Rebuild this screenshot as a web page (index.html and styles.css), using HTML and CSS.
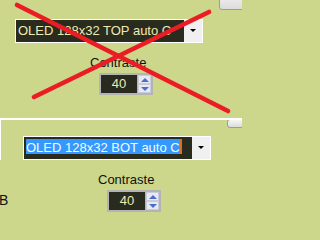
FILE: index.html
```html
<!DOCTYPE html>
<html>
<head>
<meta charset="utf-8">
<link rel="stylesheet" href="styles.css">
</head>
<body>
<div class="shot shot-top">
  <div class="head">
    <div class="bar"><span class="btn"></span></div>
    <div class="combo">
      <div class="combo-field"><span class="combo-text">OLED 128x32 TOP auto C</span></div>
      <div class="combo-drop"><span class="tri"></span></div>
    </div>
  </div>
  <div class="row">
    <span class="side">B</span>
    <div class="group">
      <div class="label">Contraste</div>
      <div class="spin">
        <div class="spin-val">40</div>
        <div class="spin-btns"><span class="sb up"></span><span class="sb down"></span></div>
      </div>
    </div>
  </div>
  <svg class="cross" width="242" height="118" viewBox="0 0 242 118">
    <line x1="17" y1="5" x2="228" y2="111"></line>
    <line x1="209" y1="12" x2="34" y2="97"></line>
  </svg>
</div>
<div class="shot shot-bot">
  <div class="head">
    <div class="bar"><span class="btn"></span></div>
    <div class="combo">
      <div class="combo-field"><span class="combo-text sel">OLED 128x32 BOT auto C</span></div>
      <div class="combo-drop"><span class="tri"></span></div>
    </div>
  </div>
  <div class="row">
    <span class="side">B</span>
    <div class="group">
      <div class="label">Contraste</div>
      <div class="spin">
        <div class="spin-val">40</div>
        <div class="spin-btns"><span class="sb up"></span><span class="sb down"></span></div>
      </div>
    </div>
  </div>
</div>
</body>
</html>
```
FILE: styles.css
```css
html, body {
  margin: 0;
  padding: 0;
}
body {
  width: 242px;
  height: 222px;
  overflow: hidden;
  background: #ccd78b;
  font-family: "Liberation Sans", Arial, sans-serif;
}
.shot {
  background: #ccd78b;
  overflow: hidden;
  position: relative;
}
.shot-top {
  height: 118px;
}
.shot-bot {
  height: 102px;
  border-top: 2px solid #ffffff;
}
.shot-bot .head {
  border-left: 1px solid #ffffff;
}
.bar {
  height: 10px;
  display: flex;
  justify-content: flex-end;
}
.shot-bot .bar {
  height: 8px;
}
.btn {
  width: 30px;
  height: 20px;
  margin-top: -10px;
  margin-right: -7px;
  box-sizing: border-box;
  border: 1px solid #9c9c9c;
  border-radius: 3px;
  background: linear-gradient(#f6f6f6, #dcdcdc);
}
.shot-bot .btn {
  height: 9px;
  margin-top: -1px;
  margin-right: -15px;
}
.combo {
  display: flex;
  width: 188px;
  height: 24px;
  box-sizing: border-box;
  border: 1px solid #ffffff;
  margin-top: 9px;
  margin-left: 15px;
}
.shot-bot .combo {
  margin-top: 8px;
  margin-left: 22px;
}
.combo-field {
  flex: 1;
  background: #2a2b1f;
  padding: 1px 0 0 2px;
  overflow: hidden;
  white-space: nowrap;
}
.combo-text {
  display: inline-block;
  font-size: 13px;
  line-height: 12px;
  padding-top: 3px;
  height: 12px;
  color: #efeab4;
}
.combo-text.sel {
  background: #3399ff;
  color: #f8faff;
  border-right: 2px solid #d8701e;
}
.combo-drop {
  width: 18px;
  background: #f0f0f0;
  display: flex;
  align-items: center;
  justify-content: center;
}
.tri {
  width: 0;
  height: 0;
  margin-top: -1px;
  border-left: 3px solid transparent;
  border-right: 3px solid transparent;
  border-top: 3px solid #000000;
}
.row {
  display: flex;
  align-items: flex-start;
}
.side {
  flex: none;
  width: 99px;
  margin-left: -1px;
  margin-top: 33px;
  font-size: 14px;
  line-height: 15px;
  color: #111111;
}
.shot-top .side {
  margin-left: -9px;
}
.group {
  margin-top: 12px;
  display: flex;
  flex-direction: column;
  align-items: flex-start;
}
.label {
  font-size: 13px;
  line-height: 15px;
  color: #111111;
}
.spin {
  display: flex;
  margin-left: 9px;
  margin-top: 3px;
  width: 54px;
  height: 22px;
  box-sizing: border-box;
  border: 2px solid #b4b4b4;
  background: #b4b4b4;
}
.spin-val {
  width: 36px;
  background: #2a2b1f;
  color: #efeab4;
  font-size: 13px;
  line-height: 18px;
  text-align: center;
}
.spin-btns {
  flex: 1;
  display: flex;
  flex-direction: column;
  gap: 0;
  margin-left: 1px;
}
.sb {
  flex: 1;
  box-sizing: border-box;
  background: #e8eaf3;
  border: 1px solid #c9cbd8;
  display: flex;
  align-items: center;
  justify-content: center;
}
.sb.up::before {
  content: "";
  width: 0;
  height: 0;
  border-left: 4px solid transparent;
  border-right: 4px solid transparent;
  border-bottom: 4px solid #4d6dc8;
}
.sb.down::before {
  content: "";
  width: 0;
  height: 0;
  border-left: 4px solid transparent;
  border-right: 4px solid transparent;
  border-top: 4px solid #4d6dc8;
}
.cross {
  position: absolute;
  left: 0;
  top: 0;
}
.cross line {
  stroke: #ec1c24;
  stroke-width: 4.6;
  stroke-linecap: round;
}
```
